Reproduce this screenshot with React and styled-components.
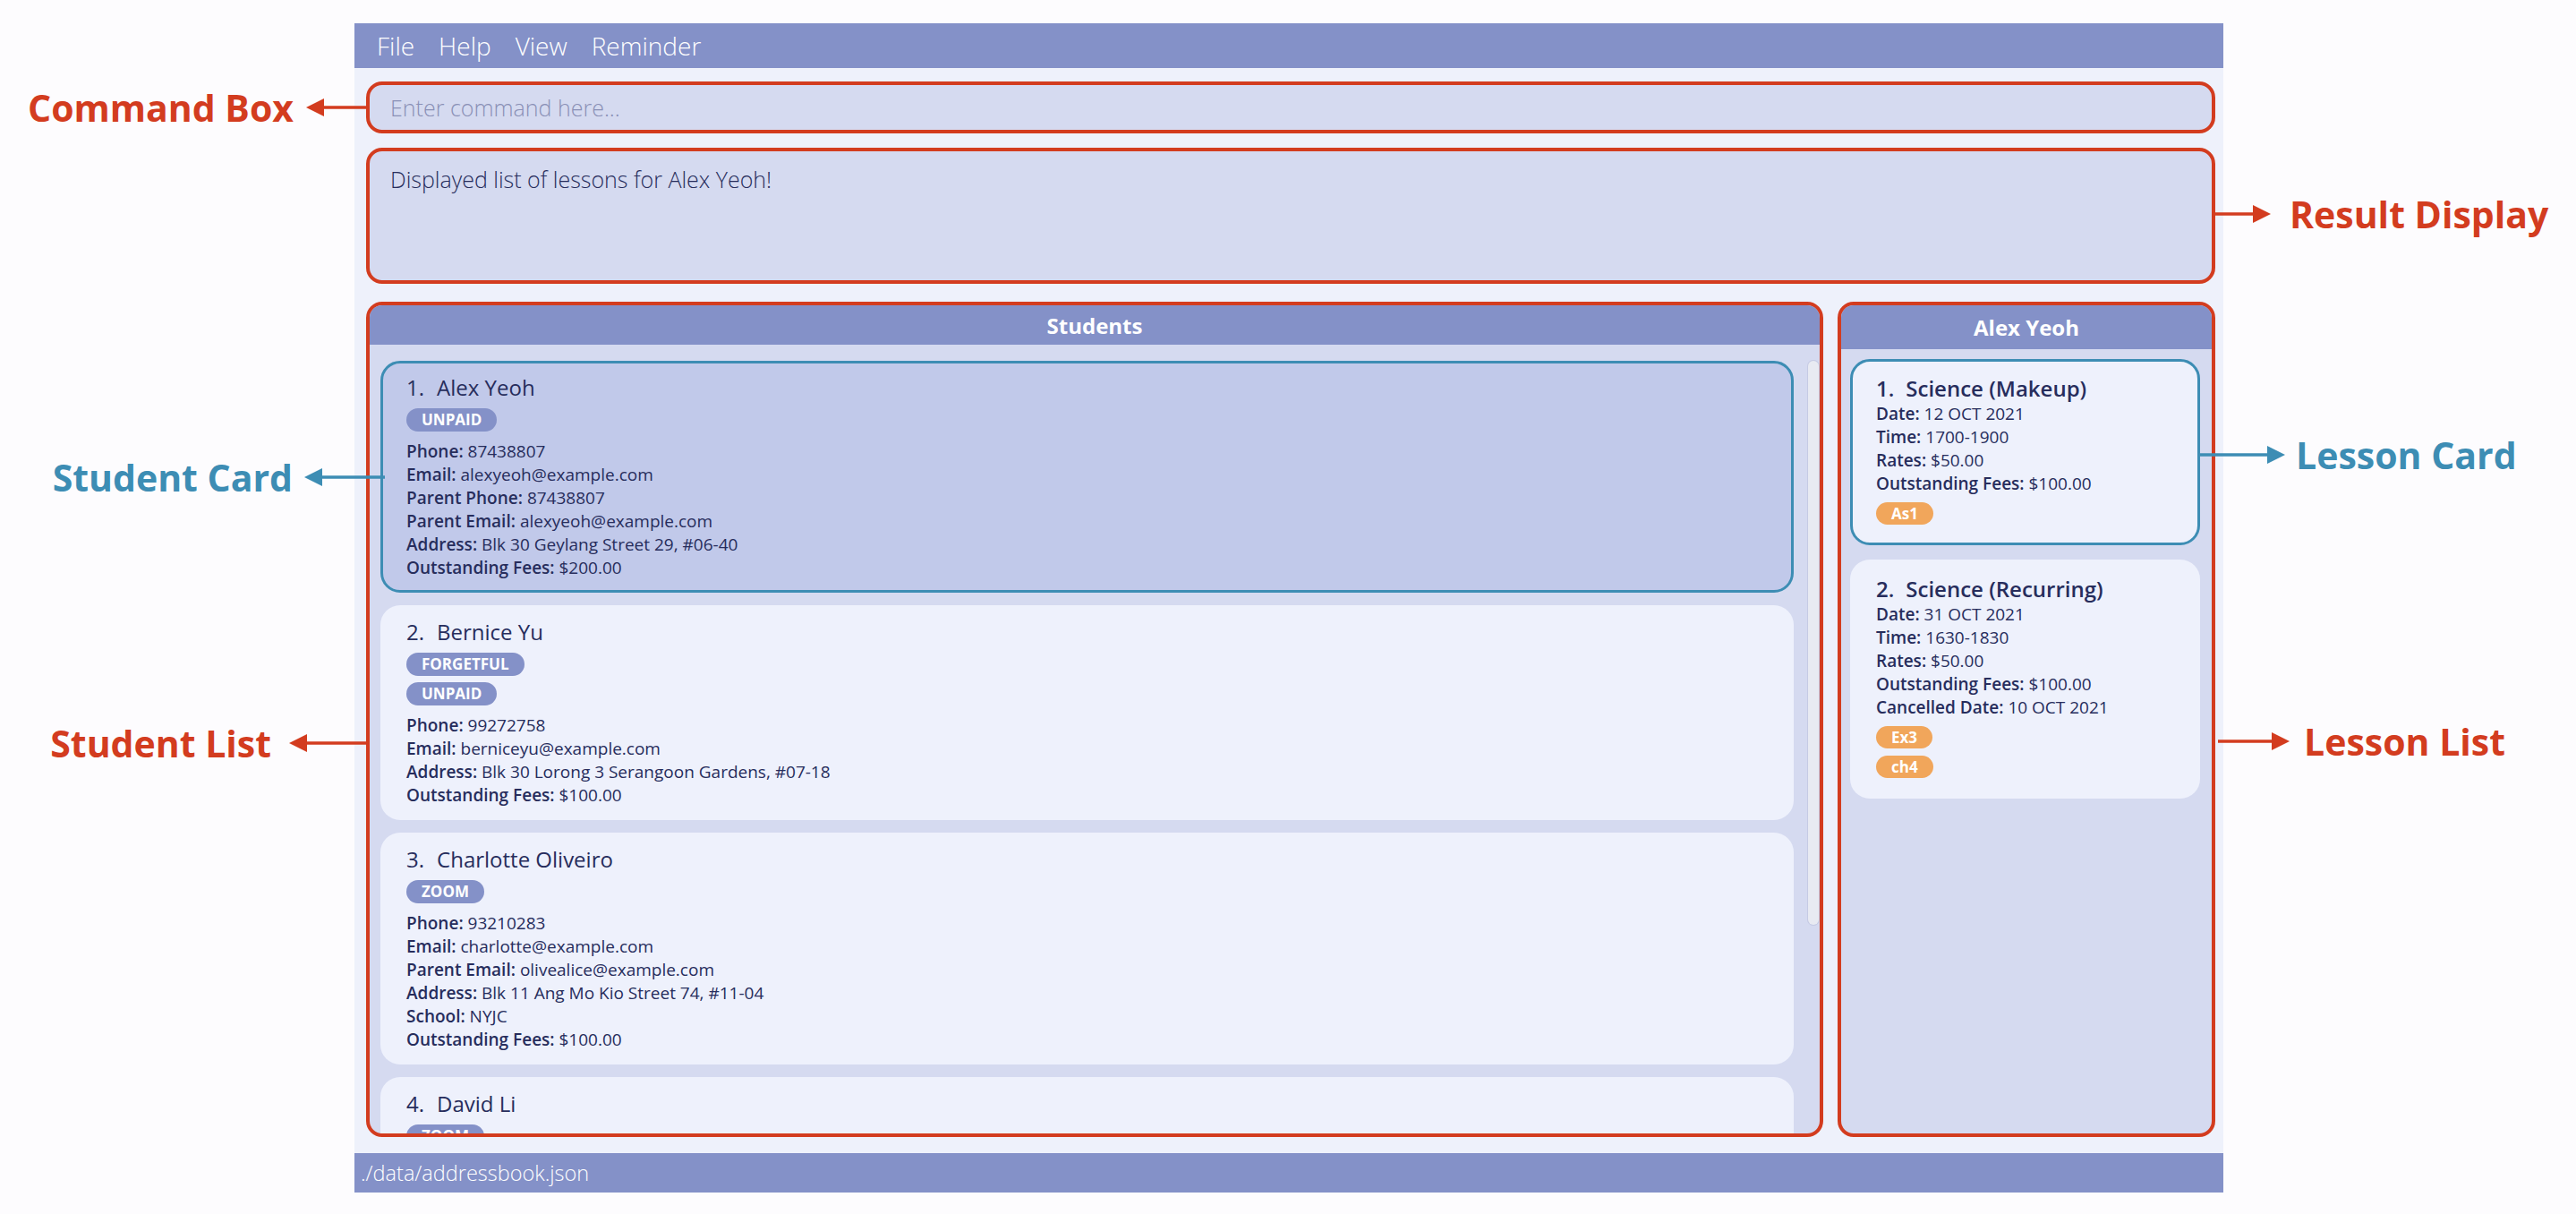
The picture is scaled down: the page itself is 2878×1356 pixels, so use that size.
import styled, { createGlobalStyle } from "styled-components"

const RED = "#d33c1f"
const TEAL = "#3d8db4"
const NAVY = "#272d5c"
const PERI = "#8491c8"

const students = [
    {
        name: "Alex Yeoh",
        tags: ["UNPAID"],
        selected: true,
        fields: [
            ["Phone", "87438807"],
            ["Email", "alexyeoh@example.com"],
            ["Parent Phone", "87438807"],
            ["Parent Email", "alexyeoh@example.com"],
            ["Address", "Blk 30 Geylang Street 29, #06-40"],
            ["Outstanding Fees", "$200.00"],
        ],
    },
    {
        name: "Bernice Yu",
        tags: ["FORGETFUL", "UNPAID"],
        fields: [
            ["Phone", "99272758"],
            ["Email", "berniceyu@example.com"],
            ["Address", "Blk 30 Lorong 3 Serangoon Gardens, #07-18"],
            ["Outstanding Fees", "$100.00"],
        ],
    },
    {
        name: "Charlotte Oliveiro",
        tags: ["ZOOM"],
        fields: [
            ["Phone", "93210283"],
            ["Email", "charlotte@example.com"],
            ["Parent Email", "olivealice@example.com"],
            ["Address", "Blk 11 Ang Mo Kio Street 74, #11-04"],
            ["School", "NYJC"],
            ["Outstanding Fees", "$100.00"],
        ],
    },
    // only the top of this card shows above the panel edge
    {
        name: "David Li",
        tags: ["ZOOM"],
        fields: [],
    },
]

const lessons = [
    {
        title: "Science (Makeup)",
        selected: true,
        tags: ["As1"],
        fields: [
            ["Date", "12 OCT 2021"],
            ["Time", "1700-1900"],
            ["Rates", "$50.00"],
            ["Outstanding Fees", "$100.00"],
        ],
    },
    {
        title: "Science (Recurring)",
        tags: ["Ex3", "ch4"],
        fields: [
            ["Date", "31 OCT 2021"],
            ["Time", "1630-1830"],
            ["Rates", "$50.00"],
            ["Outstanding Fees", "$100.00"],
            ["Cancelled Date", "10 OCT 2021"],
        ],
    },
]

// callouts drawn over the screenshot, anchored at the arrow end touching the box
const callouts = [
    { text: "Command Box", side: "left", at: 410, y: 120, arrow: 68, gap: 14, color: RED },
    { text: "Result Display", side: "right", at: 2474, y: 239, arrow: 63, gap: 21, color: RED },
    { text: "Student Card", side: "left", at: 430, y: 533, arrow: 90, gap: 13, color: TEAL },
    { text: "Student List", side: "left", at: 410, y: 830, arrow: 87, gap: 20, color: RED },
    { text: "Lesson Card", side: "right", at: 2458, y: 508, arrow: 95, gap: 12, color: TEAL },
    { text: "Lesson List", side: "right", at: 2478, y: 828, arrow: 80, gap: 16, color: RED },
]

const Arrow = ({ width, color, dir }) => {
    const head = 20
    return (
        <svg width={width} height={22} viewBox={`0 0 ${width} 22`} style={{ flexShrink: 0 }}>
            {dir === "left" ? (
                <>
                    <line x1={head - 2} y1={11} x2={width} y2={11} stroke={color} strokeWidth={3.5} />
                    <polygon points={`0,11 ${head},1 ${head},21`} fill={color} />
                </>
            ) : (
                <>
                    <line x1={0} y1={11} x2={width - head + 2} y2={11} stroke={color} strokeWidth={3.5} />
                    <polygon points={`${width},11 ${width - head},1 ${width - head},21`} fill={color} />
                </>
            )}
        </svg>
    )
}

const App = () => {
    return (
        <Page>
            <GlobalStyle />
            <Window>
                <MenuBar>
                    <span>File</span>
                    <span>Help</span>
                    <span>View</span>
                    <span>Reminder</span>
                </MenuBar>
                <Body>
                    <CommandBox>Enter command here...</CommandBox>
                    <ResultDisplay>Displayed list of lessons for Alex Yeoh!</ResultDisplay>
                    <Panels>
                        <Panel>
                            <PanelHeader>Students</PanelHeader>
                            <StudentArea>
                                <CardColumn>
                                    {students.map((s, i) => (
                                        <StudentCard key={s.name} $selected={s.selected}>
                                            <Title>
                                                <span>{i + 1}.</span>
                                                <span>{s.name}</span>
                                            </Title>
                                            <Tags $gap={7} $space="8px 0 9px">
                                                {s.tags.map((t) => (
                                                    <Tag key={t}>{t}</Tag>
                                                ))}
                                            </Tags>
                                            {s.fields.map(([k, v]) => (
                                                <Line key={k}>
                                                    <b>{k}:</b> {v}
                                                </Line>
                                            ))}
                                        </StudentCard>
                                    ))}
                                </CardColumn>
                                <ScrollThumb />
                            </StudentArea>
                        </Panel>
                        <Panel>
                            <PanelHeader $tall>Alex Yeoh</PanelHeader>
                            <LessonArea>
                                {lessons.map((l, i) => (
                                    <LessonCard key={l.title} $selected={l.selected}>
                                        <Title $strong>
                                            <span>{i + 1}.</span>
                                            <span>{l.title}</span>
                                        </Title>
                                        {l.fields.map(([k, v]) => (
                                            <Line key={k}>
                                                <b>{k}:</b> {v}
                                            </Line>
                                        ))}
                                        <Tags $gap={8} $space="8px 0 0">
                                            {l.tags.map((t) => (
                                                <Tag key={t} $orange>{t}</Tag>
                                            ))}
                                        </Tags>
                                    </LessonCard>
                                ))}
                            </LessonArea>
                        </Panel>
                    </Panels>
                </Body>
                <StatusBar>./data/addressbook.json</StatusBar>
            </Window>

            {callouts.map((c) => (
                <Callout
                    key={c.text}
                    $side={c.side}
                    $at={c.at}
                    $y={c.y}
                    $gap={c.gap}
                    $color={c.color}
                >
                    {c.side === "left" ? (
                        <>
                            <span>{c.text}</span>
                            <Arrow width={c.arrow} color={c.color} dir="left" />
                        </>
                    ) : (
                        <>
                            <Arrow width={c.arrow} color={c.color} dir="right" />
                            <span>{c.text}</span>
                        </>
                    )}
                </Callout>
            ))}
        </Page>
    )
}

export default App

const GlobalStyle = createGlobalStyle`
    html, body {
        margin: 0;
        padding: 0;
        background: #fdfcfe;
    }
    body {
        font-family: "Open Sans", "Liberation Sans", sans-serif;
        color: ${NAVY};
    }
    * {
        box-sizing: border-box;
    }
`
const Page = styled.div`
    position: relative;
    width: 2878px;
    height: 1356px;
    overflow: hidden;
    display: grid;
    grid-template-columns: 396px 2088px 1fr;
    align-items: start;
    padding-top: 26px;
`
const Window = styled.div`
    grid-column: 2;
    height: 1306px;
    display: flex;
    flex-direction: column;
    background: #eef1fb;
`
const MenuBar = styled.div`
    height: 50px;
    flex-shrink: 0;
    display: flex;
    align-items: center;
    gap: 27px;
    padding-left: 25px;
    background: ${PERI};
    color: #fff;
    font-size: 28px;
    font-weight: 300;
`
const Body = styled.div`
    flex: 1;
    min-height: 0;
    display: flex;
    flex-direction: column;
    padding: 15px 9px 18px 13px;
`
const CommandBox = styled.div`
    height: 58px;
    flex-shrink: 0;
    display: flex;
    align-items: center;
    padding-left: 23px;
    border: 4px solid ${RED};
    border-radius: 18px;
    background: #d5daf0;
    color: #8a90b6;
    font-size: 25px;
    font-weight: 300;
`
const ResultDisplay = styled.div`
    height: 152px;
    flex-shrink: 0;
    margin-top: 16px;
    padding: 15px 23px;
    border: 4px solid ${RED};
    border-radius: 18px;
    background: #d5daf0;
    font-size: 25px;
    line-height: 32px;
    font-weight: 300;
`
const Panels = styled.div`
    flex: 1;
    min-height: 0;
    margin-top: 20px;
    display: grid;
    grid-template-columns: 1fr 422px;
    gap: 16px;
`
const Panel = styled.div`
    min-height: 0;
    display: flex;
    flex-direction: column;
    overflow: hidden;
    border: 4px solid ${RED};
    border-radius: 18px;
    background: #d5daf0;
`
const PanelHeader = styled.div`
    height: ${(p) => (p.$tall ? 49 : 44)}px;
    flex-shrink: 0;
    display: flex;
    align-items: center;
    justify-content: center;
    background: ${PERI};
    color: #fff;
    font-size: 24px;
    font-weight: 700;
`
const StudentArea = styled.div`
    flex: 1;
    min-height: 0;
    display: flex;
    gap: 16px;
    padding: 18px 1px 0 12px;
`
const CardColumn = styled.div`
    flex: 1;
    min-width: 0;
    display: flex;
    flex-direction: column;
    gap: 14px;
    overflow: hidden;
`
const ScrollThumb = styled.div`
    width: 12px;
    height: 630px;
    flex-shrink: 0;
    border-radius: 6px;
    background: #e8eaf2;
    box-shadow: 0 0 0 1px rgba(150, 156, 190, 0.25);
`
const StudentCard = styled.div`
    flex-shrink: 0;
    padding: 12px 26px;
    border: 3px solid ${(p) => (p.$selected ? TEAL : "transparent")};
    border-radius: 22px;
    background: ${(p) => (p.$selected ? "#c1c9ea" : "#eef1fc")};
`
const Title = styled.div`
    display: flex;
    gap: ${(p) => (p.$strong ? 13 : 14)}px;
    font-size: 24px;
    line-height: 30px;
    font-weight: ${(p) => (p.$strong ? 600 : 500)};
`
const Tags = styled.div`
    display: flex;
    flex-direction: column;
    align-items: flex-start;
    gap: ${(p) => p.$gap}px;
    margin: ${(p) => p.$space};
`
const Tag = styled.span`
    height: ${(p) => (p.$orange ? 25 : 26)}px;
    line-height: ${(p) => (p.$orange ? 25 : 26)}px;
    padding: 0 17px;
    border-radius: 13px;
    background: ${(p) => (p.$orange ? "#f1a65b" : PERI)};
    color: #fff;
    font-size: 17px;
    font-weight: 700;
`
const Line = styled.div`
    font-size: 19px;
    line-height: 26px;
    b {
        font-weight: 600;
    }
`
const LessonArea = styled.div`
    flex: 1;
    min-height: 0;
    display: flex;
    flex-direction: column;
    gap: 16px;
    padding: 11px 13px 0 10px;
`
const LessonCard = styled.div`
    padding: 15px 26px 20px;
    border: 3px solid ${(p) => (p.$selected ? TEAL : "transparent")};
    border-radius: 22px;
    background: #eef1fc;
`
const StatusBar = styled.div`
    height: 44px;
    flex-shrink: 0;
    display: flex;
    align-items: center;
    padding-left: 7px;
    background: ${PERI};
    color: #fff;
    font-size: 23.5px;
    font-weight: 300;
`
const Callout = styled.div`
    position: absolute;
    top: ${(p) => p.$y - 28}px;
    ${(p) => (p.$side === "left" ? `right: ${2878 - p.$at}px;` : `left: ${p.$at}px;`)}
    height: 56px;
    display: flex;
    align-items: center;
    gap: ${(p) => p.$gap}px;
    color: ${(p) => p.$color};
    font-size: 41px;
    font-weight: 700;
    white-space: nowrap;
`
